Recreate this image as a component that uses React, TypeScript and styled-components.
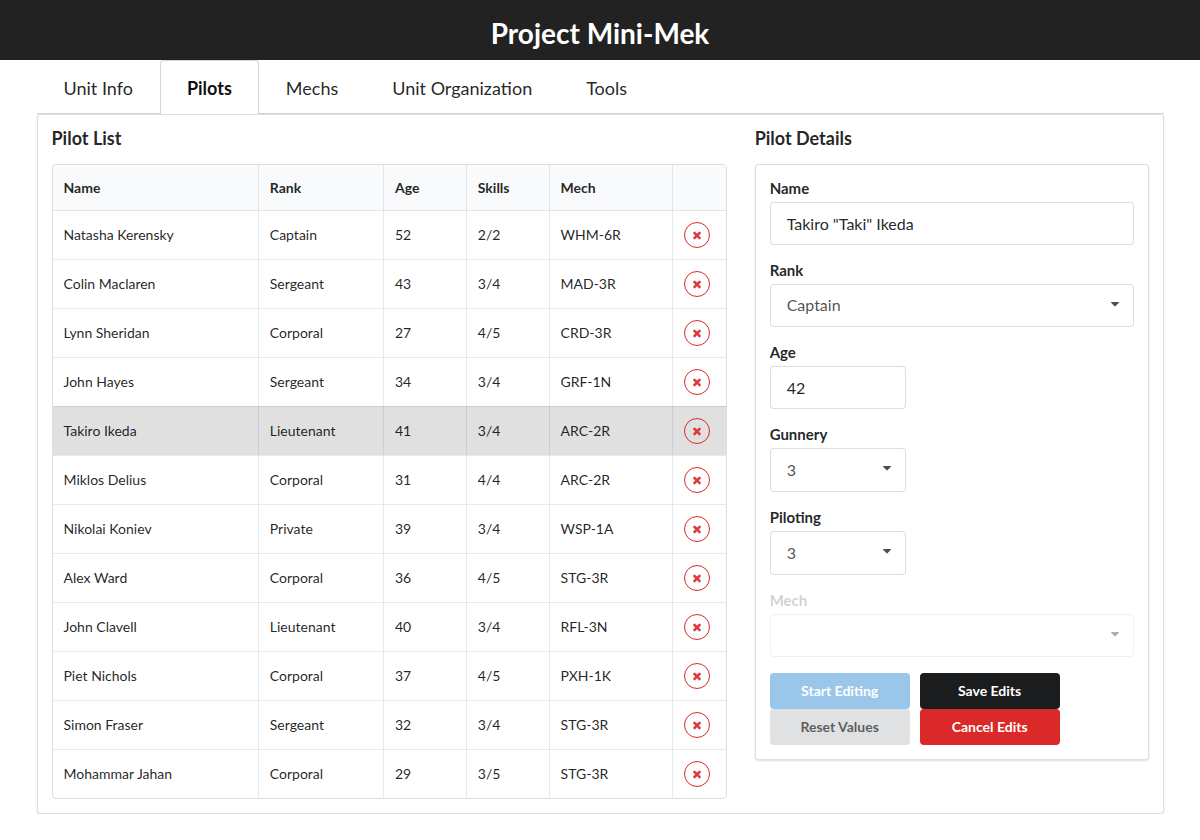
import React, { useId, useState } from "react";
import styled, { createGlobalStyle } from "styled-components";

const GlobalStyle = createGlobalStyle`
  *, *::before, *::after { box-sizing: border-box; }
  body {
    margin: 0;
    background: #fff;
    color: rgba(0, 0, 0, 0.87);
    font-family: Lato, "Liberation Sans", sans-serif;
    font-size: 14px;
    line-height: 18px;
  }
  input, select, button { font-family: inherit; }
`;

const BORDER = "rgba(34, 36, 38, 0.15)";
const INNER_BORDER = "rgba(34, 36, 38, 0.1)";

const AppHeader = styled.header`
  display: flex;
  justify-content: center;
  padding: 15px 16px 9px;
  background: #222;
`;

const AppTitle = styled.h1`
  margin: 0;
  color: #fff;
  font-size: 28px;
  font-weight: 700;
  line-height: 36px;
`;

const Container = styled.main`
  width: 100%;
  max-width: 1127px;
  margin: 0 auto;
`;

const TabBar = styled.nav`
  display: flex;
  border-bottom: 1px solid #d4d4d5;
`;

const Tab = styled.a<{ $active: boolean }>`
  margin-bottom: -1px;
  padding: 17px 26px 15px;
  border: 1px solid ${(p) => (p.$active ? "#d4d4d5" : "transparent")};
  border-bottom: 0;
  border-radius: 4px 4px 0 0;
  background: ${(p) => (p.$active ? "#fff" : "transparent")};
  color: ${(p) => (p.$active ? "rgba(0, 0, 0, 0.95)" : "rgba(0, 0, 0, 0.87)")};
  font-size: 18px;
  font-weight: ${(p) => (p.$active ? 700 : 400)};
  line-height: 21px;
  text-decoration: none;
`;

const Segment = styled.section`
  border: 1px solid ${BORDER};
  border-radius: 4px;
  background: #fff;
  box-shadow: 0 1px 2px 0 ${BORDER};
`;

const Panel = styled(Segment)`
  display: flex;
  padding: 12px 0 14px;
`;

const Column = styled.div<{ $share: number }>`
  width: ${(p) => (p.$share / 16) * 100}%;
  padding: 0 14px;
`;

const SectionTitle = styled.h2`
  margin: 0 0 14px;
  font-size: 18px;
  font-weight: 700;
  line-height: 23px;
`;

const Table = styled.table`
  width: 100%;
  table-layout: fixed;
  border: 1px solid ${BORDER};
  border-radius: 4px;
  border-collapse: separate;
  border-spacing: 0;
  overflow: hidden;
  text-align: left;

  tbody tr + tr td { border-top: 1px solid ${INNER_BORDER}; }
`;

const Col = styled.col<{ $width?: string }>`
  width: ${(p) => p.$width ?? "auto"};
`;

const HeadRow = styled.tr`
  background: #f9fafb;

  th, td {
    height: 46px;
    padding: 0 11px;
    border-bottom: 1px solid ${INNER_BORDER};
    font-weight: 700;
  }
  > * + * { border-left: 1px solid ${INNER_BORDER}; }
`;

const PilotRow = styled.tr<{ $selected: boolean }>`
  background: ${(p) => (p.$selected ? "#e0e0e0" : "transparent")};
  cursor: pointer;

  td { padding: 11px; }
  td + td { border-left: 1px solid ${INNER_BORDER}; }
`;

const DeleteButton = styled.button`
  display: flex;
  align-items: center;
  justify-content: center;
  width: 26px;
  height: 26px;
  padding: 0;
  border: 1px solid #db2828;
  border-radius: 50%;
  background: transparent;
  color: #db2828;
  cursor: pointer;

  svg { opacity: 0.9; }
`;

const DetailsForm = styled.form`
  padding: 14px;
`;

const Field = styled.div<{ $disabled?: boolean }>`
  margin-bottom: 16px;
  opacity: ${(p) => (p.$disabled ? 0.45 : 1)};
`;

const Label = styled.label<{ $muted?: boolean }>`
  display: block;
  margin-bottom: 4px;
  opacity: ${(p) => (p.$muted ? 0.45 : 1)};
  font-size: 15px;
  font-weight: 700;
  line-height: 19px;
`;

const TextInput = styled.input<{ $narrow?: boolean }>`
  display: block;
  width: ${(p) => (p.$narrow ? "37.5%" : "100%")};
  height: 43px;
  padding: 0 16px;
  border: 1px solid ${BORDER};
  border-radius: 4px;
  background: #fff;
  color: rgba(0, 0, 0, 0.87);
  font-size: 16px;
`;

const SelectBox = styled.div<{ $narrow?: boolean }>`
  position: relative;
  width: ${(p) => (p.$narrow ? "37.5%" : "100%")};
`;

const Select = styled.select<{ $narrow?: boolean }>`
  display: block;
  appearance: none;
  width: 100%;
  height: ${(p) => (p.$narrow ? "44px" : "43px")};
  padding: 0 32px 2px 16px;
  border: 1px solid ${BORDER};
  border-radius: 4px;
  background: #fff;
  color: rgba(0, 0, 0, 0.7);
  font-size: 16px;
  opacity: 1;
`;

const CaretIcon = styled.svg`
  position: absolute;
  top: 13px;
  right: 12px;
  width: 14px;
  height: 14px;
  fill: rgba(0, 0, 0, 0.7);
  pointer-events: none;
`;

const ButtonGrid = styled.div`
  display: grid;
  grid-template-columns: repeat(2, 140px);
  column-gap: 10px;
`;

const buttonTones = {
  primary: { background: "#2185d0", color: "#fff" },
  black: { background: "#1b1c1d", color: "#fff" },
  neutral: { background: "#e0e1e2", color: "rgba(0, 0, 0, 0.6)" },
  negative: { background: "#db2828", color: "#fff" },
};

const ActionButton = styled.button<{ $tone: keyof typeof buttonTones }>`
  height: 36px;
  padding: 0 20px 2px;
  border: 0;
  border-radius: 4px;
  background: ${(p) => buttonTones[p.$tone].background};
  color: ${(p) => buttonTones[p.$tone].color};
  font-size: 14px;
  font-weight: 700;
  cursor: pointer;

  &:disabled {
    opacity: 0.45;
    cursor: default;
  }
`;

const TABS = ["Unit Info", "Pilots", "Mechs", "Unit Organization", "Tools"];

const PILOTS = [
  ["Natasha Kerensky", "Captain", "52", "2/2", "WHM-6R"],
  ["Colin Maclaren", "Sergeant", "43", "3/4", "MAD-3R"],
  ["Lynn Sheridan", "Corporal", "27", "4/5", "CRD-3R"],
  ["John Hayes", "Sergeant", "34", "3/4", "GRF-1N"],
  ["Takiro Ikeda", "Lieutenant", "41", "3/4", "ARC-2R"],
  ["Miklos Delius", "Corporal", "31", "4/4", "ARC-2R"],
  ["Nikolai Koniev", "Private", "39", "3/4", "WSP-1A"],
  ["Alex Ward", "Corporal", "36", "4/5", "STG-3R"],
  ["John Clavell", "Lieutenant", "40", "3/4", "RFL-3N"],
  ["Piet Nichols", "Corporal", "37", "4/5", "PXH-1K"],
  ["Simon Fraser", "Sergeant", "32", "3/4", "STG-3R"],
  ["Mohammar Jahan", "Corporal", "29", "3/5", "STG-3R"],
];

const RANKS = ["Captain", "Lieutenant", "Sergeant", "Corporal", "Private"];
const SKILLS = ["0", "1", "2", "3", "4", "5", "6", "7", "8"];

function CloseIcon() {
  return (
    <svg width="12" height="12" viewBox="0 0 1792 1792" fill="currentColor" aria-hidden="true">
      <path d="M1490 1322q0 40-28 68l-136 136q-28 28-68 28t-68-28l-294-294-294 294q-28 28-68 28t-68-28l-136-136q-28-28-28-68t28-68l294-294-294-294q-28-28-28-68t28-68l136-136q28-28 68-28t68 28l294 294 294-294q28-28 68-28t68 28l136 136q28 28 28 68t-28 68l-294 294 294 294q28 28 28 68z" />
    </svg>
  );
}

interface SelectFieldProps {
  label: string;
  options: string[];
  initial: string;
  narrow?: boolean;
  disabled?: boolean;
}

function SelectField({ label, options, initial, narrow, disabled }: SelectFieldProps) {
  const id = useId();
  return (
    <Field $disabled={disabled}>
      <Label htmlFor={id} $muted={disabled}>{label}</Label>
      <SelectBox $narrow={narrow}>
        <Select id={id} defaultValue={initial} disabled={disabled} $narrow={narrow}>
          {options.map((option) => (
            <option key={option}>{option}</option>
          ))}
        </Select>
        <CaretIcon viewBox="0 0 1792 1792" aria-hidden="true">
          <path d="M1408 704q0 26-19 45l-448 448q-19 19-45 19t-45-19l-448-448q-19-19-19-45t19-45 45-19h896q26 0 45 19t19 45z" />
        </CaretIcon>
      </SelectBox>
    </Field>
  );
}

function TextField({ label, initial, narrow }: { label: string; initial: string; narrow?: boolean }) {
  const id = useId();
  return (
    <Field>
      <Label htmlFor={id}>{label}</Label>
      <TextInput id={id} type="text" defaultValue={initial} $narrow={narrow} />
    </Field>
  );
}

function PilotTable() {
  const [selected, setSelected] = useState("Takiro Ikeda");
  return (
    <Table>
      <colgroup>
        <Col $width="30.5%" />
        <Col $width="18.6%" />
        <Col $width="12.3%" />
        <Col $width="12.3%" />
        <Col $width="18.4%" />
        <Col />
      </colgroup>
      <thead>
        <HeadRow>
          <th scope="col">Name</th>
          <th scope="col">Rank</th>
          <th scope="col">Age</th>
          <th scope="col">Skills</th>
          <th scope="col">Mech</th>
          <td />
        </HeadRow>
      </thead>
      <tbody>
        {PILOTS.map((pilot) => (
          <PilotRow
            key={pilot[0]}
            $selected={pilot[0] === selected}
            onClick={() => setSelected(pilot[0])}
          >
            {pilot.map((value, index) => (
              <td key={index}>{value}</td>
            ))}
            <td>
              <DeleteButton type="button" aria-label={`Delete ${pilot[0]}`}>
                <CloseIcon />
              </DeleteButton>
            </td>
          </PilotRow>
        ))}
      </tbody>
    </Table>
  );
}

export default function App() {
  const [tab, setTab] = useState("Pilots");
  return (
    <>
      <GlobalStyle />
      <AppHeader>
        <AppTitle>Project Mini-Mek</AppTitle>
      </AppHeader>
      <Container>
        <TabBar>
          {TABS.map((name) => (
            <Tab
              key={name}
              href="#"
              $active={name === tab}
              aria-current={name === tab ? "page" : undefined}
              onClick={() => setTab(name)}
            >
              {name}
            </Tab>
          ))}
        </TabBar>
        <Panel>
          <Column $share={10}>
            <SectionTitle>Pilot List</SectionTitle>
            <PilotTable />
          </Column>
          <Column $share={6}>
            <SectionTitle>Pilot Details</SectionTitle>
            <Segment>
              <DetailsForm onSubmit={(event) => event.preventDefault()}>
                <TextField label="Name" initial={'Takiro "Taki" Ikeda'} />
                <SelectField label="Rank" options={RANKS} initial="Captain" />
                <TextField label="Age" initial="42" narrow />
                <SelectField label="Gunnery" options={SKILLS} initial="3" narrow />
                <SelectField label="Piloting" options={SKILLS} initial="3" narrow />
                <SelectField label="Mech" options={[""]} initial="" disabled />
                <ButtonGrid>
                  <ActionButton type="button" $tone="primary" disabled>Start Editing</ActionButton>
                  <ActionButton type="submit" $tone="black">Save Edits</ActionButton>
                  <ActionButton type="reset" $tone="neutral">Reset Values</ActionButton>
                  <ActionButton type="button" $tone="negative">Cancel Edits</ActionButton>
                </ButtonGrid>
              </DetailsForm>
            </Segment>
          </Column>
        </Panel>
      </Container>
    </>
  );
}
